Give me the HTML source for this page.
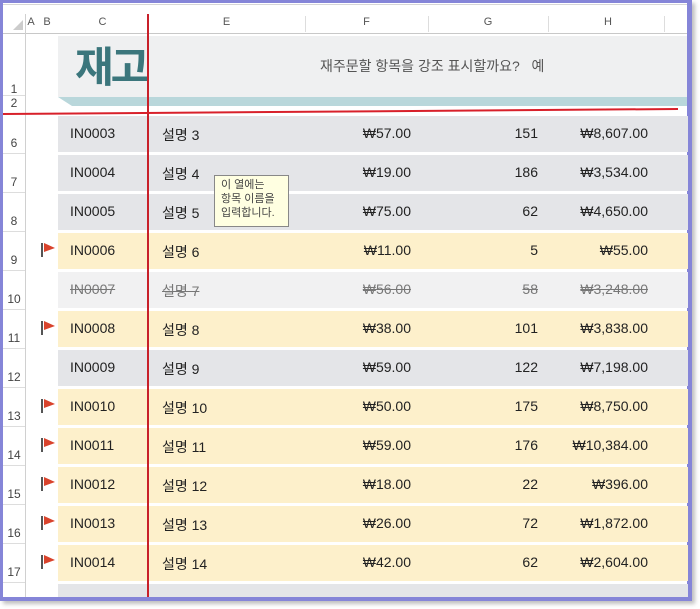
<!DOCTYPE html>
<html><head><meta charset="utf-8"><style>
*{margin:0;padding:0;box-sizing:border-box}
body{width:700px;height:609px;background:#fff;position:relative;overflow:hidden;font-family:"Liberation Sans","Noto Sans CJK KR",sans-serif;}
.a{position:absolute}
.frame{left:0;top:0;width:692px;height:601px;border:3px solid #8585d8;border-right-width:5px;border-bottom-width:4px;background:#fff;box-shadow:3px 3px 4px rgba(0,0,0,.25)}
.ch{top:16px;font-size:11px;color:#555;text-align:center}
.rn{left:3px;width:22px;font-size:12px;color:#444;text-align:center}
.row{left:58px;width:630px;height:36px}
.t{font-size:14px;color:#222;top:9px;white-space:nowrap}
.r{text-align:right}
.s{color:#777;text-decoration:line-through}
</style></head><body>
<div class="a frame"></div>
<div class="a" style="left:3px;top:4px;width:684px;height:1px;background:#d6d6d6"></div>
<div class="a" style="left:3px;top:33px;width:684px;height:1px;background:#c8c8c8"></div>
<div class="a" style="left:25px;top:14px;width:1px;height:583px;background:#d0d0d0"></div>
<svg class="a" style="left:13px;top:20px" width="10" height="10"><polygon points="10,0 10,10 0,10" fill="#ccc"/></svg>
<div class="a ch" style="left:25px;width:12px">A</div>
<div class="a ch" style="left:37px;width:20px">B</div>
<div class="a ch" style="left:57px;width:91px">C</div>
<div class="a ch" style="left:148px;width:157px">E</div>
<div class="a ch" style="left:305px;width:123px">F</div>
<div class="a ch" style="left:428px;width:120px">G</div>
<div class="a ch" style="left:548px;width:120px">H</div>
<div class="a" style="left:305px;top:16px;width:1px;height:16px;background:#ddd"></div>
<div class="a" style="left:428px;top:16px;width:1px;height:16px;background:#ddd"></div>
<div class="a" style="left:548px;top:16px;width:1px;height:16px;background:#ddd"></div>
<div class="a" style="left:664px;top:16px;width:1px;height:16px;background:#ddd"></div>
<div class="a" style="left:58px;top:36px;width:629px;height:61px;background:#eff0f1"></div>
<div class="a" style="left:75px;top:36px;width:73px;height:60px;overflow:hidden;font-size:42px;font-weight:bold;color:#3b767c;line-height:58px;letter-spacing:-3px;white-space:nowrap;font-family:'Noto Sans CJK KR',sans-serif">재고</div>
<div class="a" style="left:320px;top:56px;font-size:14px;color:#555;font-family:'Liberation Sans','Noto Sans CJK KR',sans-serif">재주문할 항목을 강조 표시할까요?&nbsp;&nbsp; 예</div>
<svg class="a" style="left:58px;top:97px" width="629" height="9"><polygon points="0,0 629,0 629,9 14,9" fill="#b9d7db"/></svg>
<div class="a rn" style="top:82px">1</div>
<div class="a rn" style="top:96px">2</div>
<div class="a" style="left:3px;top:95px;width:22px;height:1px;background:#ddd"></div>
<div id="rows"></div>
<script>
var d=[["6","IN0003","설명 3","₩57.00","151","₩8,607.00",0],
["7","IN0004","설명 4","₩19.00","186","₩3,534.00",0],
["8","IN0005","설명 5","₩75.00","62","₩4,650.00",0],
["9","IN0006","설명 6","₩11.00","5","₩55.00",1],
["10","IN0007","설명 7","₩56.00","58","₩3,248.00",2],
["11","IN0008","설명 8","₩38.00","101","₩3,838.00",1],
["12","IN0009","설명 9","₩59.00","122","₩7,198.00",0],
["13","IN0010","설명 10","₩50.00","175","₩8,750.00",1],
["14","IN0011","설명 11","₩59.00","176","₩10,384.00",1],
["15","IN0012","설명 12","₩18.00","22","₩396.00",1],
["16","IN0013","설명 13","₩26.00","72","₩1,872.00",1],
["17","IN0014","설명 14","₩42.00","62","₩2,604.00",1]];
var h="";
d.forEach(function(r,i){var y=116+39*i;var bg=r[6]==1?"#fdf0cb":(r[6]==2?"#f1f1f2":"#e4e5e8");var c=r[6]==2?" s":"";
h+='<div class="a row" style="top:'+y+'px;background:'+bg+'">'+
'<div class="a t'+c+'" style="left:12px">'+r[1]+'</div>'+
'<div class="a t'+c+'" style="left:104px">'+r[2]+'</div>'+
'<div class="a t r'+c+'" style="right:277px">'+r[3]+'</div>'+
'<div class="a t r'+c+'" style="right:150px">'+r[4]+'</div>'+
'<div class="a t r'+c+'" style="right:40px">'+r[5]+'</div></div>';
h+='<div class="a rn" style="top:'+(y+20)+'px">'+r[0]+'</div>';
h+='<div class="a" style="left:3px;top:'+(y+37)+'px;width:22px;height:1px;background:#ddd"></div>';
if(r[6]==1)h+='<svg class="a" style="left:40px;top:'+(y+9)+'px" width="16" height="16"><rect x="1" y="1" width="2" height="14" fill="#555"/><polygon points="4,1 15,6 4,10" fill="#d9432c"/></svg>';
});
h+='<div class="a row" style="top:584px;height:13px;background:#e4e5e8"></div>';
document.getElementById("rows").innerHTML=h;
</script>
<div class="a" style="left:214px;top:175px;width:75px;height:52px;background:#ffffe1;border:1px solid #888;font-size:11px;line-height:14px;color:#444;padding:2px 0 0 6px;font-family:'Liberation Sans','Noto Sans CJK KR',sans-serif">이 열에는<br>항목 이름을<br>입력합니다.</div>
<div class="a" style="left:147px;top:14px;width:2px;height:583px;background:#c8202a"></div>
<svg class="a" style="left:3px;top:106px" width="680" height="10"><line x1="0" y1="8" x2="675" y2="3" stroke="#d8202a" stroke-width="2"/></svg>
</body></html>
